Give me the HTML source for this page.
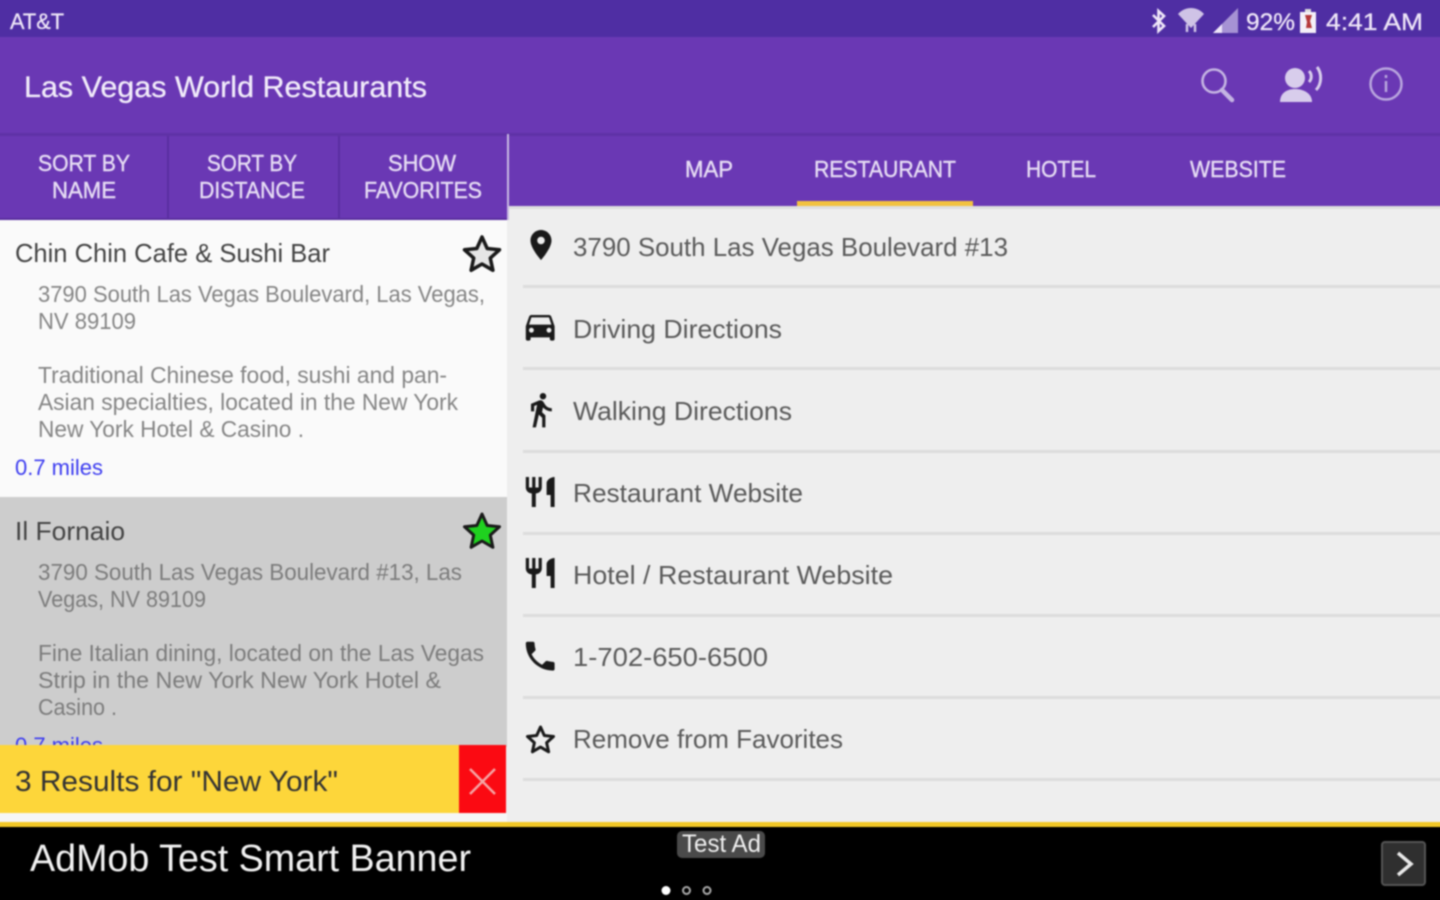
<!DOCTYPE html>
<html><head><meta charset="utf-8"><title>Las Vegas World Restaurants</title>
<style>
html,body{margin:0;padding:0;width:1440px;height:900px;overflow:hidden;background:#000}
#wrap{position:relative;width:1440px;height:900px;overflow:hidden;contain:paint}
svg{display:block;position:absolute;left:-10px;top:-10px;filter:blur(0.7px)}
text{font-family:"Liberation Sans",sans-serif}
.st{fill:#eee6f8;font-size:24px;stroke:#eee6f8;stroke-width:.3px}
.tb{fill:#e6dcf4;font-size:23px;stroke:#e6dcf4;stroke-width:.4px}
.nm{fill:#444;font-size:26px}
.ds{fill:#858585;font-size:23px}
.ds2{fill:#7c7c7c;font-size:23px}
.lk{fill:#3c3cf0;font-size:22px}
.rw{fill:#5a5a5a;font-size:26px}
</style></head><body><div id="wrap">
<svg width="1460" height="920" viewBox="-10 -10 1460 920" xmlns="http://www.w3.org/2000/svg">
<rect x="-10" y="-10" width="1460" height="920" fill="#eeeeee"/>
<rect x="-10" y="-10" width="1460" height="47" fill="#4f2ea3"/>
<rect x="-10" y="37" width="1460" height="169" fill="#6a38b4"/>
<rect x="-10" y="133" width="1460" height="3" fill="#5f32a6"/>
<text x="10" y="29" class="st" style="font-size:22px" textLength="54" lengthAdjust="spacingAndGlyphs">AT&amp;T</text>
<g fill="none" stroke="#eee6f8" stroke-width="2.6"><path d="M1153 15l11 11-5.500 5V11l5.500 5-11 11"/></g>
<path d="M1178 14c7-8 19-8 26 0l-13 14z" fill="#cfc3e6"/><path d="M1187 24v8M1195 24v8" stroke="#cfc3e6" stroke-width="2.500"/>
<path d="M1213 33L1238 8v25z" fill="#a692d4"/><path d="M1213 33l9-9v9z" fill="#eee6f8"/>
<text x="1246" y="30" class="st" textLength="49" lengthAdjust="spacingAndGlyphs">92%</text>
<rect x="1300" y="12" width="16" height="21" fill="#f4f0f8"/><rect x="1305" y="9" width="6" height="3" fill="#ddd"/><path d="M1305 15h7l-2 6 2 7h-6l1-6z" fill="#b5393a"/>
<text x="1326" y="30" class="st" textLength="97" lengthAdjust="spacingAndGlyphs">4:41 AM</text>

<text x="24" y="97" fill="#f1ebfa" style="font-size:30px" stroke="#f1ebfa" stroke-width=".3" textLength="403" lengthAdjust="spacingAndGlyphs">Las Vegas World Restaurants</text>
<g fill="none" stroke="#c4b4e2" stroke-width="2.600"><circle cx="1214" cy="81" r="11.500"/><path d="M1222 90l10 10" stroke-width="4.500" stroke-linecap="round"/></g>
<g fill="#d8cdec"><circle cx="1295" cy="78" r="10"/><path d="M1280 102c0-9 7-13 15-13s17 4 17 13z"/></g>
<g fill="none" stroke="#d8cdec"><path d="M1309 71c3 3 3 8 0 11" stroke-width="3"/><path d="M1317 67c5 6 5 17-1 23" stroke-width="3"/></g>
<g fill="none" stroke="#b9a6de" stroke-width="2.500"><circle cx="1386" cy="84" r="15.500"/><path d="M1386 81v11M1386 75v3"/></g>

<rect x="-10" y="136" width="517" height="83" fill="#6a38b4"/>
<rect x="167" y="136" width="2" height="83" fill="#5a2ea0"/>
<rect x="338" y="136" width="2" height="83" fill="#5a2ea0"/>
<rect x="507" y="134" width="2" height="86" fill="#c7b9e2"/>
<rect x="-10" y="218" width="517" height="2" fill="#5a2ea0"/>
<text x="38" y="171" class="tb" textLength="92" lengthAdjust="spacingAndGlyphs">SORT BY</text>
<text x="52" y="198" class="tb" textLength="64" lengthAdjust="spacingAndGlyphs">NAME</text>
<text x="207" y="171" class="tb" textLength="90" lengthAdjust="spacingAndGlyphs">SORT BY</text>
<text x="199" y="198" class="tb" textLength="106" lengthAdjust="spacingAndGlyphs">DISTANCE</text>
<text x="388" y="171" class="tb" textLength="68" lengthAdjust="spacingAndGlyphs">SHOW</text>
<text x="364" y="198" class="tb" textLength="118" lengthAdjust="spacingAndGlyphs">FAVORITES</text>

<text x="685" y="177" class="tb" textLength="48" lengthAdjust="spacingAndGlyphs">MAP</text>
<text x="814" y="177" class="tb" textLength="142" lengthAdjust="spacingAndGlyphs">RESTAURANT</text>
<text x="1026" y="177" class="tb" textLength="70" lengthAdjust="spacingAndGlyphs">HOTEL</text>
<text x="1190" y="177" class="tb" textLength="96" lengthAdjust="spacingAndGlyphs">WEBSITE</text>
<rect x="797" y="201" width="176" height="5" fill="#f2c23e"/>
<rect x="509" y="206" width="941" height="3" fill="#dedede"/>

<rect x="-10" y="220" width="517" height="277" fill="#fafafa"/>
<rect x="-10" y="497" width="517" height="250" fill="#cdcdcd"/>
<text x="15" y="262" class="nm" textLength="315" lengthAdjust="spacingAndGlyphs">Chin Chin Cafe &amp; Sushi Bar</text>
<text x="38" y="302" class="ds" textLength="447" lengthAdjust="spacingAndGlyphs">3790 South Las Vegas Boulevard, Las Vegas,</text>
<text x="38" y="329" class="ds" textLength="98" lengthAdjust="spacingAndGlyphs">NV 89109</text>
<text x="38" y="383" class="ds" textLength="409" lengthAdjust="spacingAndGlyphs">Traditional Chinese food, sushi and pan-</text>
<text x="38" y="410" class="ds" textLength="420" lengthAdjust="spacingAndGlyphs">Asian specialties, located in the New York</text>
<text x="38" y="437" class="ds" textLength="266" lengthAdjust="spacingAndGlyphs">New York Hotel &amp; Casino .</text>
<text x="15" y="475" class="lk" textLength="88" lengthAdjust="spacingAndGlyphs">0.7 miles</text>
<path d="M482 237l5.200 11.500 12.300 1.300-9.200 8.300 2.600 12.200-10.900-6.300-10.900 6.300 2.600-12.200-9.200-8.300 12.300-1.300z" fill="#e6e6e6" stroke="#1a1a1a" stroke-width="3.500" stroke-linejoin="round"/>
<text x="15" y="540" fill="#444" style="font-size:26px" textLength="110" lengthAdjust="spacingAndGlyphs">Il Fornaio</text>
<text x="38" y="580" class="ds2" textLength="424" lengthAdjust="spacingAndGlyphs">3790 South Las Vegas Boulevard #13, Las</text>
<text x="38" y="607" class="ds2" textLength="168" lengthAdjust="spacingAndGlyphs">Vegas, NV 89109</text>
<text x="38" y="661" class="ds2" textLength="446" lengthAdjust="spacingAndGlyphs">Fine Italian dining, located on the Las Vegas</text>
<text x="38" y="688" class="ds2" textLength="403" lengthAdjust="spacingAndGlyphs">Strip in the New York New York Hotel &amp;</text>
<text x="38" y="715" class="ds2" textLength="79" lengthAdjust="spacingAndGlyphs">Casino .</text>
<text x="15" y="753" class="lk" textLength="88" lengthAdjust="spacingAndGlyphs">0.7 miles</text>
<path d="M482 514l5.200 11.500 12.300 1.300-9.200 8.300 2.600 12.200-10.900-6.300-10.900 6.300 2.600-12.200-9.200-8.300 12.300-1.300z" fill="#1fd11f" stroke="#1a1a1a" stroke-width="3" stroke-linejoin="round"/>

<rect x="-10" y="745" width="469" height="68" fill="#fdd63a"/>
<rect x="459" y="745" width="47" height="68" fill="#fb0a12"/>
<path d="M470 769l25 25M495 769l-25 25" stroke="#f5a5a5" stroke-width="2.500"/>
<rect x="-10" y="813" width="517" height="9" fill="#f6f6f6"/>
<text x="15" y="791" fill="#333" style="font-size:29px" textLength="323" lengthAdjust="spacingAndGlyphs">3 Results for "New York"</text>

<g fill="#dcdcdc">
<rect x="523" y="285" width="927" height="3"/><rect x="523" y="367" width="927" height="3"/><rect x="523" y="450" width="927" height="3"/><rect x="523" y="532" width="927" height="3"/><rect x="523" y="614" width="927" height="3"/><rect x="523" y="696" width="927" height="3"/><rect x="523" y="778" width="927" height="3"/>
</g>
<text x="573" y="256" class="rw" textLength="435" lengthAdjust="spacingAndGlyphs">3790 South Las Vegas Boulevard #13</text>
<text x="573" y="338" class="rw" textLength="209" lengthAdjust="spacingAndGlyphs">Driving Directions</text>
<text x="573" y="420" class="rw" textLength="219" lengthAdjust="spacingAndGlyphs">Walking Directions</text>
<text x="573" y="502" class="rw" textLength="230" lengthAdjust="spacingAndGlyphs">Restaurant Website</text>
<text x="573" y="584" class="rw" textLength="320" lengthAdjust="spacingAndGlyphs">Hotel / Restaurant Website</text>
<text x="573" y="666" class="rw" textLength="195" lengthAdjust="spacingAndGlyphs">1-702-650-6500</text>
<text x="573" y="748" class="rw" textLength="270" lengthAdjust="spacingAndGlyphs">Remove from Favorites</text>

<g fill="#1a1a1a">
<path transform="translate(523 227) scale(1.5)" d="M12 2C8.130 2 5 5.130 5 9c0 5.250 7 13 7 13s7-7.750 7-13c0-3.870-3.130-7-7-7zm0 9.500c-1.380 0-2.500-1.120-2.500-2.500s1.120-2.500 2.500-2.500 2.500 1.120 2.500 2.500-1.120 2.500-2.500 2.500z"/>
<path transform="translate(521 307) scale(1.6)" d="M18.920 6.010C18.720 5.420 18.160 5 17.500 5h-11c-.66 0-1.210.42-1.420 1.010L3 12v8c0 .55.45 1 1 1h1c.55 0 1-.45 1-1v-1h12v1c0 .55.45 1 1 1h1c.55 0 1-.45 1-1v-8l-2.080-5.990zM6.500 16c-.83 0-1.500-.67-1.500-1.500S5.670 13 6.500 13s1.500.67 1.500 1.500S7.330 16 6.500 16zm11 0c-.83 0-1.500-.67-1.500-1.500s.67-1.500 1.500-1.500 1.500.67 1.500 1.500-.67 1.500-1.500 1.500zM5 11l1.500-4.500h11L19 11H5z"/>
<path transform="translate(521.400 390.600) scale(1.6)" d="M13.500 5.500c1.100 0 2-.9 2-2s-.9-2-2-2-2 .9-2 2 .9 2 2 2zM9.800 8.900L7 23h2.100l1.800-8 2.100 2v6h2v-7.500l-2.100-2 .6-3C14.800 12 16.800 13 19 13v-2c-1.900 0-3.500-1-4.300-2.400l-1-1.600c-.4-.6-1-1-1.700-1-.3 0-.5.1-.8.1L6 8.300V13h2V9.600l1.800-.7"/>
<path transform="translate(521 474) scale(1.6 1.5)" d="M11 9H9V2H7v7H5V2H3v7c0 2.120 1.660 3.840 3.750 3.970V22h2.500v-9.030C11.340 12.840 13 11.120 13 9V2h-2v7zm5-3v8h2.500v8H21V2c-2.760 0-5 2.240-5 4z"/>
<path transform="translate(521 555) scale(1.6 1.5)" d="M11 9H9V2H7v7H5V2H3v7c0 2.120 1.660 3.840 3.750 3.970V22h2.500v-9.030C11.340 12.840 13 11.120 13 9V2h-2v7zm5-3v8h2.500v8H21V2c-2.760 0-5 2.240-5 4z"/>
<path transform="translate(521 637) scale(1.6)" d="M6.620 10.790c1.440 2.830 3.760 5.140 6.590 6.590l2.200-2.200c.27-.27.67-.36 1.020-.24 1.120.37 2.330.57 3.570.57.55 0 1 .45 1 1V20c0 .55-.45 1-1 1-9.390 0-17-7.610-17-17 0-.55.45-1 1-1h3.500c.55 0 1 .45 1 1 0 1.250.2 2.450.57 3.570.11.35.03.74-.25 1.020l-2.200 2.200z"/>
</g>
<path d="M540.500 727l3.800 8.500 9.200 1-6.900 6.200 2 9.100-8.100-4.700-8.100 4.700 2-9.100-6.900-6.200 9.200-1z" fill="none" stroke="#1a1a1a" stroke-width="3" stroke-linejoin="round"/>

<rect x="-10" y="822" width="1460" height="5" fill="#f2c827"/>
<rect x="-10" y="827" width="1460" height="83" fill="#000"/>
<text x="30" y="871" fill="#f2f2f2" style="font-size:38px" textLength="441" lengthAdjust="spacingAndGlyphs">AdMob Test Smart Banner</text>
<rect x="677" y="831" width="88" height="27" rx="5" fill="#4a4a4a"/>
<text x="682" y="852" fill="#f0f0f0" style="font-size:25px" textLength="79" lengthAdjust="spacingAndGlyphs">Test Ad</text>
<circle cx="666" cy="890.500" r="4.500" fill="#fff"/>
<circle cx="686.500" cy="890.500" r="3.500" fill="none" stroke="#aaa" stroke-width="2"/>
<circle cx="707" cy="890.500" r="3.500" fill="none" stroke="#aaa" stroke-width="2"/>
<rect x="1382" y="842" width="43" height="43" rx="3" fill="#2f2f2f" stroke="#555" stroke-width="2"/>
<path d="M1398 853l13 11-13 11" fill="none" stroke="#e8e8e8" stroke-width="3.500"/>
</svg>
</div></body></html>
